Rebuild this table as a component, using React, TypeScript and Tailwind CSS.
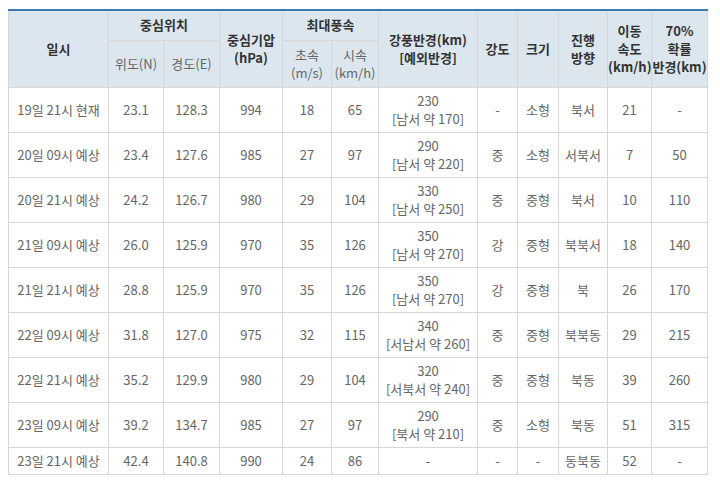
import React from "react";

type Row = {
  time: string;
  lat: string;
  lon: string;
  pressure: string;
  ms: string;
  kmh: string;
  radius: string;
  radiusEx?: string;
  strength: string;
  size: string;
  dir: string;
  speed: string;
  prob: string;
};

const rows: Row[] = [
  { time: "19일 21시 현재", lat: "23.1", lon: "128.3", pressure: "994", ms: "18", kmh: "65", radius: "230", radiusEx: "[남서 약 170]", strength: "-", size: "소형", dir: "북서", speed: "21", prob: "-" },
  { time: "20일 09시 예상", lat: "23.4", lon: "127.6", pressure: "985", ms: "27", kmh: "97", radius: "290", radiusEx: "[남서 약 220]", strength: "중", size: "소형", dir: "서북서", speed: "7", prob: "50" },
  { time: "20일 21시 예상", lat: "24.2", lon: "126.7", pressure: "980", ms: "29", kmh: "104", radius: "330", radiusEx: "[남서 약 250]", strength: "중", size: "중형", dir: "북서", speed: "10", prob: "110" },
  { time: "21일 09시 예상", lat: "26.0", lon: "125.9", pressure: "970", ms: "35", kmh: "126", radius: "350", radiusEx: "[남서 약 270]", strength: "강", size: "중형", dir: "북북서", speed: "18", prob: "140" },
  { time: "21일 21시 예상", lat: "28.8", lon: "125.9", pressure: "970", ms: "35", kmh: "126", radius: "350", radiusEx: "[남서 약 270]", strength: "강", size: "중형", dir: "북", speed: "26", prob: "170" },
  { time: "22일 09시 예상", lat: "31.8", lon: "127.0", pressure: "975", ms: "32", kmh: "115", radius: "340", radiusEx: "[서남서 약 260]", strength: "중", size: "중형", dir: "북북동", speed: "29", prob: "215" },
  { time: "22일 21시 예상", lat: "35.2", lon: "129.9", pressure: "980", ms: "29", kmh: "104", radius: "320", radiusEx: "[서북서 약 240]", strength: "중", size: "중형", dir: "북동", speed: "39", prob: "260" },
  { time: "23일 09시 예상", lat: "39.2", lon: "134.7", pressure: "985", ms: "27", kmh: "97", radius: "290", radiusEx: "[북서 약 210]", strength: "중", size: "소형", dir: "북동", speed: "51", prob: "315" },
  { time: "23일 21시 예상", lat: "42.4", lon: "140.8", pressure: "990", ms: "24", kmh: "86", radius: "-", strength: "-", size: "-", dir: "동북동", speed: "52", prob: "-" },
];

const widths = [100, 55, 56, 63, 49, 47, 99, 40, 41, 49, 44, 56];

const th = "border border-[#d6d6d6] bg-[#dce6ef] text-[#333] font-bold text-[13px] leading-[18px] text-center align-middle p-0";
const td = "border border-[#d6d6d6] text-[#666] text-[13px] leading-[18px] text-center align-middle p-0";

export default function App() {
  return (
    <div className="bg-white w-[720px] h-[494px] pt-[9px] pl-[8px]" style={{ fontFamily: '"Noto Sans CJK KR", "Noto Sans", sans-serif' }}>
      <table className="table-fixed border-collapse w-[699px] border-t-2 border-t-[#3b78b4]">
        <colgroup>
          {widths.map((w, i) => (
            <col key={i} style={{ width: w }} />
          ))}
        </colgroup>
        <thead>
          <tr className="h-[30px]">
            <th rowSpan={2} className={`${th} border-t-2 border-t-[#3b78b4]`}>일시</th>
            <th colSpan={2} className={`${th} border-t-2 border-t-[#3b78b4]`}>중심위치</th>
            <th rowSpan={2} className={`${th} border-t-2 border-t-[#3b78b4]`}>중심기압<br />(hPa)</th>
            <th colSpan={2} className={`${th} border-t-2 border-t-[#3b78b4]`}>최대풍속</th>
            <th rowSpan={2} className={`${th} border-t-2 border-t-[#3b78b4]`}>강풍반경(km)<br />[예외반경]</th>
            <th rowSpan={2} className={`${th} border-t-2 border-t-[#3b78b4]`}>강도</th>
            <th rowSpan={2} className={`${th} border-t-2 border-t-[#3b78b4]`}>크기</th>
            <th rowSpan={2} className={`${th} border-t-2 border-t-[#3b78b4]`}>진행<br />방향</th>
            <th rowSpan={2} className={`${th} border-t-2 border-t-[#3b78b4]`}>이동<br />속도<br />(km/h)</th>
            <th rowSpan={2} className={`${th} border-t-2 border-t-[#3b78b4]`}>70%<br />확률<br />반경(km)</th>
          </tr>
          <tr className="h-[47px]">
            <th className={`${th} font-normal text-[#666]`}>위도(N)</th>
            <th className={`${th} font-normal text-[#666]`}>경도(E)</th>
            <th className={`${th} font-normal text-[#666]`}>초속<br />(m/s)</th>
            <th className={`${th} font-normal text-[#666]`}>시속<br />(km/h)</th>
          </tr>
        </thead>
        <tbody>
          {rows.map((r) => (
            <tr key={r.time} className={r.radiusEx ? "h-[45px]" : "h-[27px]"}>
              <td className={td}>{r.time}</td>
              <td className={td}>{r.lat}</td>
              <td className={td}>{r.lon}</td>
              <td className={td}>{r.pressure}</td>
              <td className={td}>{r.ms}</td>
              <td className={td}>{r.kmh}</td>
              <td className={td}>
                {r.radius}
                {r.radiusEx && (
                  <>
                    <br />
                    {r.radiusEx}
                  </>
                )}
              </td>
              <td className={td}>{r.strength}</td>
              <td className={td}>{r.size}</td>
              <td className={td}>{r.dir}</td>
              <td className={td}>{r.speed}</td>
              <td className={td}>{r.prob}</td>
            </tr>
          ))}
        </tbody>
      </table>
    </div>
  );
}
